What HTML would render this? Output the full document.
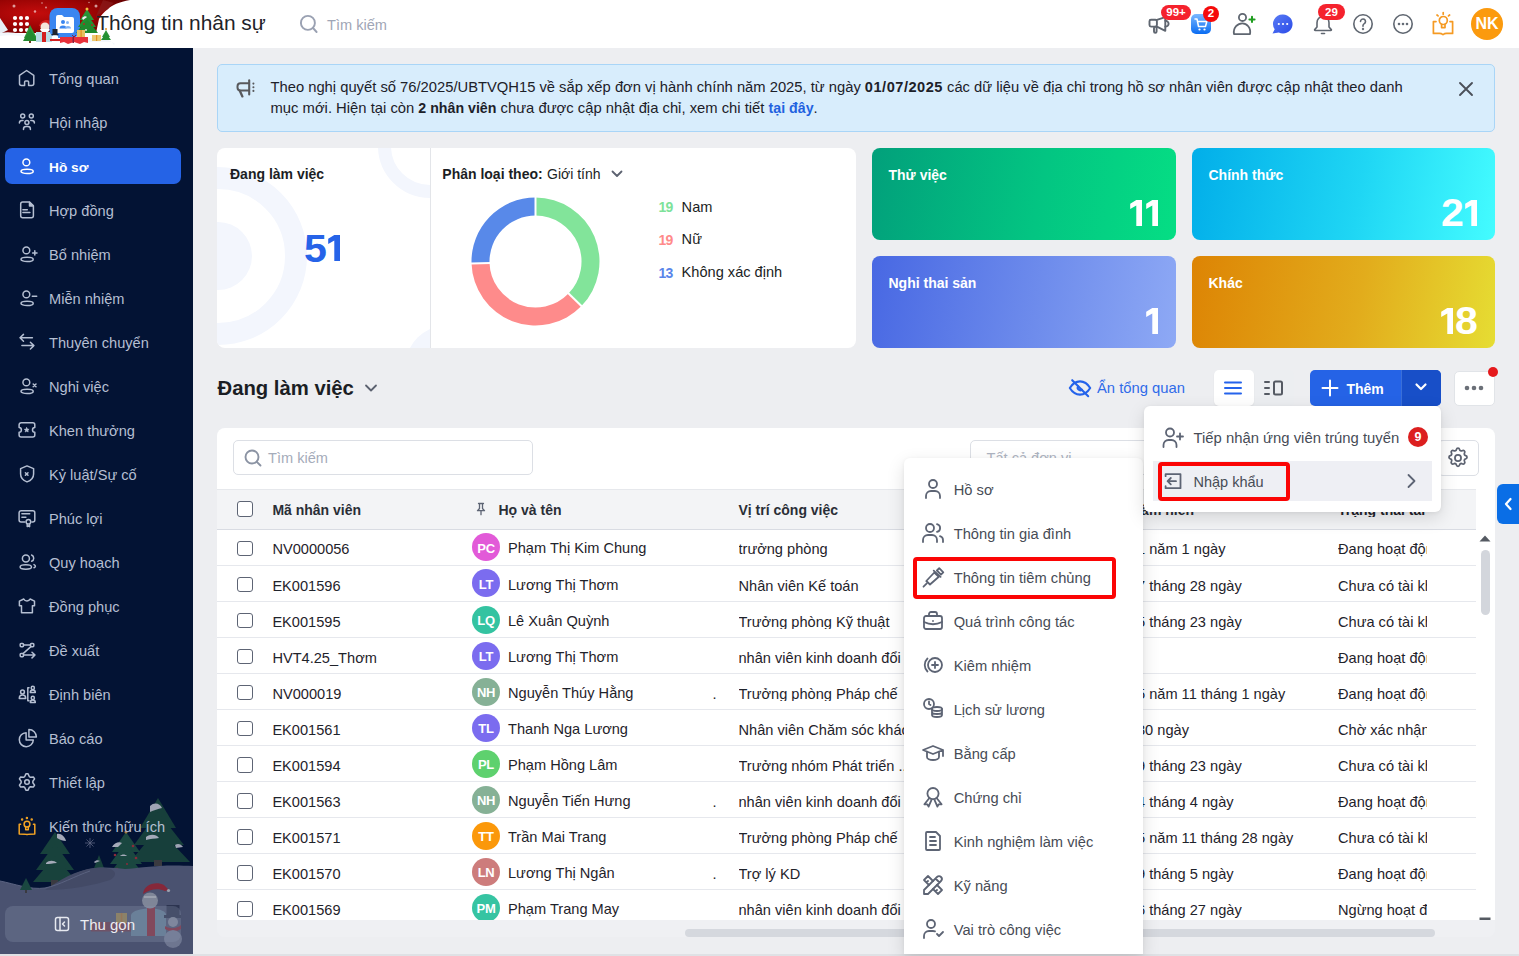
<!DOCTYPE html>
<html><head><meta charset="utf-8">
<style>
*{box-sizing:border-box;margin:0;padding:0}
html,body{width:1519px;height:956px;overflow:hidden;font-family:"Liberation Sans",sans-serif;background:#edeef1;color:#1f2329;position:relative}
.a{position:absolute}
.t{position:absolute;white-space:nowrap;line-height:1}
svg{display:block}

</style></head>
<body>
<div class="a" style="left:0px;top:0px;width:1519px;height:48px;background:#fff"></div>
<svg class="a" style="left:0;top:0" width="150" height="48" viewBox="0 0 150 48">
<defs><radialGradient id="rg" cx="0.28" cy="0.4" r="0.75"><stop offset="0" stop-color="#c40c0c"/><stop offset="0.6" stop-color="#9a0404"/><stop offset="1" stop-color="#6a0000"/></radialGradient></defs>
<path d="M0 0H130C119 2 112 5 108 9C104 12 101 15 99 19L96 33H0z" fill="url(#rg)"/><path d="M103 0L96 16L108 9C110 6 112 4 114 3z" fill="#8a1c1c" opacity="0.7"/>
<path d="M0 18L8 30L0 34z" fill="#e8eef5"/>
<path d="M0 33C12 31 22 34 30 37C45 40 70 40 90 38C100 36 110 40 115 44L110 47H10L0 45z" fill="#f2f6fb"/>
<path d="M0 36C20 33 35 40 60 42C80 43 95 41 112 42L115 47H0z" fill="#ffffff"/>
<g fill="#ffffff"><circle cx="15" cy="18" r="2.1"/><circle cx="21" cy="18" r="2.1"/><circle cx="27" cy="18" r="2.1"/><circle cx="15" cy="24" r="2.1"/><circle cx="21" cy="24" r="2.1"/><circle cx="27" cy="24" r="2.1"/><circle cx="15" cy="30" r="2.1"/><circle cx="21" cy="30" r="2.1"/><circle cx="27" cy="30" r="2.1"/></g>
<g fill="#ffffff" opacity="0.6"><circle cx="14" cy="6" r="1.5"/><circle cx="42" cy="3" r="0.8"/><circle cx="46" cy="7.5" r="0.9"/><circle cx="35" cy="11.5" r="1.2"/><circle cx="96" cy="6" r="1.5"/><circle cx="89" cy="2.5" r="0.7"/></g>
<!-- small tree left -->
<path d="M30 25L24 38H37z" fill="#2e9a3a"/><path d="M30 29L23 41H38z" fill="#238a30"/><rect x="29" y="41" width="2" height="2" fill="#6b4020"/>
<!-- santa -->
<path d="M39 26C40 20 48 18 52 22L51 26z" fill="#d42020"/><circle cx="45" cy="27" r="4.5" fill="#f4e6dc"/><path d="M40 29C41 34 49 34 50 29z" fill="#ffffff"/>
<path d="M36 32H52V42H36z" fill="#b8dde6"/><path d="M42 32H46V42H42z" fill="#d42020"/>
<!-- app logo -->
<rect x="49.5" y="8" width="30.5" height="30" rx="8" fill="#3a86f0"/>
<path d="M56 17a2 2 0 0 1 2-2h4l2 2h8a2 2 0 0 1 2 2v12a2 2 0 0 1-2 2H58a2 2 0 0 1-2-2z" fill="#ffffff"/>
<circle cx="63" cy="22" r="2" fill="#3a86f0"/><circle cx="67.5" cy="22.5" r="1.5" fill="#7fb2f5"/><path d="M59.5 28.5a3.5 3 0 0 1 7 0z" fill="#3a86f0"/><path d="M65 28.5a3 2.6 0 0 1 6 0z" fill="#7fb2f5"/>
<!-- snowman -->
<circle cx="55" cy="38" r="3.2" fill="#ffffff"/><rect x="52.5" y="29" width="5" height="6" fill="#20242e"/><rect x="51.5" y="34" width="7" height="1.2" fill="#20242e"/><path d="M50 39H60V41H50z" fill="#d42020"/>
<!-- red gift -->
<path d="M60 37H88V43L84 42L80 44L74 42L68 44L64 42L60 43z" fill="#e8313a"/><path d="M72 35L74 37L76 35" stroke="#8a2040" stroke-width="1" fill="none"/><rect x="72.5" y="37" width="1.5" height="6" fill="#8a2040"/>
<!-- big tree -->
<path d="M87 9L80 20H94z" fill="#2a9438"/><path d="M87 14L78 27H96z" fill="#239032"/><path d="M87 19L76 33H98z" fill="#1f8a2e"/>
<circle cx="87" cy="9" r="1.5" fill="#f0c040"/><circle cx="84" cy="24" r="0.9" fill="#c02020"/><circle cx="92" cy="25" r="0.9" fill="#c02020"/><circle cx="86" cy="30" r="0.9" fill="#f0f0f0"/>
<path d="M82 18C84 16 86 16 87 17L83 20z" fill="#eef2f5"/>
<!-- gold gifts -->
<rect x="77" y="30" width="8" height="7" fill="#e8c060"/><rect x="80.5" y="30" width="1.2" height="7" fill="#e39020"/>
<rect x="92" y="35" width="9" height="6" fill="#ecc870"/><rect x="96" y="35" width="1.2" height="6" fill="#e39020"/>
<!-- small tree right -->
<path d="M106 30L102 37H110z" fill="#2a9438"/><path d="M106 33L101 40H111z" fill="#239032"/><circle cx="106" cy="29" r="1" fill="#e39020"/>
</svg>
<div class="t" style="left:96.2px;top:13.01px;font-size:20.9px;color:#1f2329;" >Thông tin nhân sự</div>
<svg class="a" style="left:297px;top:12px;color:#9aa1b2;" width="22" height="22" viewBox="0 0 22 22" fill="none" stroke="currentColor" stroke-width="1.9" stroke-linecap="round" stroke-linejoin="round" ><circle cx="10.9" cy="10.9" r="7"/><path d="M16 16l3.6 4"/></svg>
<div class="t" style="left:327px;top:17.84px;font-size:14.6px;color:#9fa6b6;" >Tìm kiếm</div>
<svg class="a" style="left:1146px;top:14px;color:#5f6670;" width="26" height="22" viewBox="0 0 26 22" fill="none" stroke="currentColor" stroke-width="1.9" stroke-linecap="round" stroke-linejoin="round" ><rect x="3.5" y="5.8" width="7.4" height="6.8" rx="1.5"/><path d="M10.9 5.8L19.3 3.2V16.8L10.9 12.6"/><path d="M19.3 6.8a3.3 2.9 0 0 1 0 5.8"/><rect x="8" y="12.6" width="2.6" height="6.2" rx="1.3"/></svg>
<div class="a" style="left:1161px;top:5px;width:30px;height:15px;background:#f5222d;border-radius:8px"></div>
<div class="t" style="left:1162px;top:7.07px;font-size:11.5px;font-weight:700;color:#fff;width:28px;text-align:center" >99+</div>
<svg class="a" style="left:1191px;top:14px" width="20" height="20" viewBox="0 0 20 20"><defs><linearGradient id="cg" x1="0" y1="0" x2="0" y2="1"><stop offset="0" stop-color="#7ab8ff"/><stop offset="1" stop-color="#0a6cf2"/></linearGradient></defs><rect width="20" height="20" rx="5" fill="url(#cg)"/><path d="M4 5h2l1.5 7.5h7l1.3-5H7" fill="none" stroke="#fff" stroke-width="1.5" stroke-linecap="round" stroke-linejoin="round"/><circle cx="8.5" cy="15.5" r="1.1" fill="#fff"/><circle cx="13.5" cy="15.5" r="1.1" fill="#fff"/></svg>
<div class="a" style="left:1203px;top:6px;width:16px;height:16px;background:#f50a0a;border-radius:50%"></div>
<div class="t" style="left:1203px;top:8.47px;font-size:11.5px;font-weight:700;color:#fff;width:16px;text-align:center" >2</div>
<svg class="a" style="left:1230px;top:10px;color:#5f6670;" width="28" height="28" viewBox="0 0 28 28" fill="none" stroke="currentColor" stroke-width="1.8" stroke-linecap="round" stroke-linejoin="round" ><circle cx="12.5" cy="7.4" r="3.6"/><path d="M4 24.1C2.8 17.5 8 13.3 12.3 13.3S21.2 17.5 20 24.1Z"/></svg>
<svg class="a" style="left:1230px;top:10px;color:#1f9d1f;" width="28" height="28" viewBox="0 0 28 28" fill="none" stroke="currentColor" stroke-width="2" stroke-linecap="round" stroke-linejoin="round" ><path d="M22 6.8v5.2M19.4 9.4h5.2"/></svg>
<svg class="a" style="left:1272px;top:14px" width="21" height="20" viewBox="0 0 21 20"><defs><linearGradient id="mg" x1="0" y1="0" x2="1" y2="1"><stop offset="0" stop-color="#5a7cf5"/><stop offset="1" stop-color="#2a4be8"/></linearGradient></defs><path d="M11 0.5a9.5 9.5 0 1 1-4.2 18L0.5 19.5l2.2-4.2A9.5 9.5 0 0 1 11 0.5z" fill="url(#mg)"/><circle cx="6.8" cy="10" r="1.1" fill="#fff"/><circle cx="11" cy="10" r="1.1" fill="#fff"/><circle cx="15.2" cy="10" r="1.1" fill="#fff"/></svg>
<svg class="a" style="left:1312px;top:13px;color:#5f6670;" width="22" height="22" viewBox="0 0 22 22" fill="none" stroke="currentColor" stroke-width="1.6" stroke-linecap="round" stroke-linejoin="round" ><path d="M11 3.5c-3.5 0-6 2.7-6 6.2v4.3l-2.3 2.6c-.3.4 0 .9.5.9h15.6c.5 0 .8-.5.5-.9L17 14V9.7c0-3.5-2.5-6.2-6-6.2z"/><path d="M9.5 20.5h3"/></svg>
<div class="a" style="left:1318px;top:4px;width:27px;height:16px;background:#f5222d;border-radius:8px"></div>
<div class="t" style="left:1318px;top:6.57px;font-size:11.5px;font-weight:700;color:#fff;width:27px;text-align:center" >29</div>
<svg class="a" style="left:1352px;top:13px;color:#5f6670;" width="22" height="22" viewBox="0 0 22 22" fill="none" stroke="currentColor" stroke-width="1.6" stroke-linecap="round" stroke-linejoin="round" ><circle cx="11" cy="11" r="9.2"/><path d="M8.5 8.5a2.5 2.5 0 1 1 3.8 2.1c-.8.5-1.3 1-1.3 2v.6"/><circle cx="11" cy="16" r="0.4" fill="currentColor"/></svg>
<svg class="a" style="left:1392px;top:13px;color:#5f6670;" width="22" height="22" viewBox="0 0 22 22" fill="none" stroke="currentColor" stroke-width="1.6" stroke-linecap="round" stroke-linejoin="round" ><circle cx="11" cy="11" r="9.2"/><circle cx="7" cy="11" r="0.5" fill="currentColor"/><circle cx="11" cy="11" r="0.5" fill="currentColor"/><circle cx="15" cy="11" r="0.5" fill="currentColor"/></svg>
<svg class="a" style="left:1431px;top:10px;color:#f59a23;" width="24" height="26" viewBox="0 0 24 26" fill="none" stroke="currentColor" stroke-width="1.7" stroke-linecap="round" stroke-linejoin="round" ><path d="M5 11.6H2.4V23.4H8.5c1.3 0 2.4.4 3.5 1.2 1.1-.8 2.2-1.2 3.5-1.2h6.1V11.6H19"/><circle cx="12.3" cy="10.5" r="4"/><path d="M10.6 14.4v3.2h3.4v-3.2"/><path d="M12.2 2.6v1.6M6 5l1.1.9M18.6 5l-1.1.9"/></svg>
<div class="a" style="left:1471px;top:8px;width:32px;height:32px;background:#fb9a0e;border-radius:50%"></div>
<div class="t" style="left:1471px;top:16.46px;font-size:16px;font-weight:700;color:#fff;width:32px;text-align:center" >NK</div>

<div class="a" style="left:0px;top:48px;width:193px;height:908px;background:#031334"></div>
<svg class="a" style="left:0;top:790px" width="193" height="164" viewBox="0 0 193 164">
<!-- snowflake -->
<g stroke="#5a6380" stroke-width="0.8"><path d="M90 48v10M85 53h10M86.5 49.5l7 7M93.5 49.5l-7 7"/></g>
<!-- big right tree -->
<g fill="#173f3b">
<path d="M158 8L140 38H176z"/><path d="M158 22L134 55H184z"/><path d="M158 38L130 72H190z"/>
<rect x="154" y="70" width="8" height="6" fill="#3a3a40"/>
</g>
<path d="M150 16c4-4 10-3 12 2c-4 1-8 2-12 4z" fill="#9ea3b3"/>
<path d="M146 47c4-3 10-3 13 1c-4 .5-9 1-13 2z" fill="#a5aab9"/>
<path d="M175 55c3-2 6-1 8 2l-7 1z" fill="#9ea3b3"/>
<!-- left tree -->
<g fill="#18423c">
<path d="M55 42L40 64H70z"/><path d="M55 54L36 80H74z"/><path d="M55 66L33 92H77z"/>
<rect x="51" y="90" width="7" height="6" fill="#3a3a40"/>
</g>
<path d="M57 44c4-1 8 3 9 7c-3 0-6-1-9-3z" fill="#a5aab9"/>
<path d="M46 73c3-3 8-3 11 0c-4 .5-8 1-11 1z" fill="#a5aab9"/>
<!-- small tree -->
<path d="M99 65L91 86H107z" fill="#18423c"/><path d="M94 72c2-2 4-2 6-1l-5 2z" fill="#9ea3b3"/>
<!-- ornament tree -->
<g fill="#1a4740">
<path d="M126 42L112 62H140z"/><path d="M126 52L110 74H142z"/><path d="M126 62L108 86H145z"/>
</g>
<path d="M112 57c2-4 7-6 10-4l-4 4z" fill="#a5aab9"/><path d="M120 66c2-2 5-2 7 0z" fill="#a5aab9"/>
<circle cx="126" cy="42" r="1.6" fill="#a07840"/>
<g fill="#8a2a3a"><circle cx="133" cy="56" r="1.3"/><circle cx="115" cy="65" r="1.3"/><circle cx="136" cy="68" r="1.3"/><circle cx="117" cy="79" r="1.3"/><circle cx="127" cy="74" r="1"/></g>
<!-- hills -->
<path d="M0 91C15 94 30 100 45 98C60 95 70 84 85 80C100 76 115 78 125 79C140 78 160 74 193 76V164H0z" fill="#4a5270"/>
<path d="M45 100C60 90 75 80 95 78C115 76 120 84 110 90C95 95 70 100 45 100z" fill="#434a66"/>
<path d="M0 91C15 94 30 100 45 98C60 95 75 86 90 81" fill="none" stroke="#5a6280" stroke-width="1"/>
<!-- tiny tree -->
<path d="M26 88L20 100H32z" fill="#1a4740"/><rect x="25" y="100" width="2" height="3" fill="#3a3a40"/>
<!-- sled & gift -->
<path d="M91 132H132V141.5H91z" fill="#6a3545" opacity="0.8"/>
<rect x="116" y="123" width="11" height="10" fill="#8c7a4e"/><rect x="120.8" y="123" width="1.5" height="10" fill="#9a6a3a"/>
<!-- santa -->
<path d="M131 125C133 117 163 116 166 124L166 146H131z" fill="#5d7890"/>
<rect x="147" y="117" width="8" height="29" fill="#7e2c3e"/>
<circle cx="150" cy="110.5" r="8" fill="#7f8698"/>
<path d="M143 104C144 94 156 91 164 95L169 100L165 101C158 98 150 99 143 104Z" fill="#86283a"/>
<circle cx="168.5" cy="100.5" r="1.6" fill="#9aa0ae"/>
<path d="M144 107h12" stroke="#9aa0ae" stroke-width="2"/>
<!-- snowman -->
<rect x="166.5" y="115" width="13" height="11" fill="#2c3450"/><rect x="164" y="125" width="17" height="3" fill="#2c3450"/>
<circle cx="173" cy="132" r="5" fill="#7a8296"/>
<path d="M165 136c4 3 12 3 16-1v4c-5 3-11 3-16 0z" fill="#7e2c3e"/>
<circle cx="173" cy="149" r="9" fill="#6e7690"/>
</svg>
<svg class="a" style="left:15px;top:66px;color:#b5bfd2;" width="24" height="24" viewBox="0 0 24 24" fill="none" stroke="currentColor" stroke-width="1.5" stroke-linecap="round" stroke-linejoin="round" ><path d="M4.5 9.4L11.6 4.5L18.8 9.4V17.4a2 2 0 0 1-2 2H13.6V16.1a1 1 0 0 0-1-1H10.6a1 1 0 0 0-1 1V19.4H6.5a2 2 0 0 1-2-2Z"/></svg>
<div class="t" style="left:49px;top:72.04px;font-size:14.6px;color:#b5bfd2;" >Tổng quan</div>
<svg class="a" style="left:15px;top:110px;color:#b5bfd2;" width="24" height="24" viewBox="0 0 24 24" fill="none" stroke="currentColor" stroke-width="1.5" stroke-linecap="round" stroke-linejoin="round" ><circle cx="7.7" cy="6.1" r="2"/><circle cx="16.3" cy="6.1" r="2"/><circle cx="11.9" cy="12.5" r="2"/><path d="M4.4 13a2.5 2.5 0 0 1 2.5-2.5H8M19.4 13a2.5 2.5 0 0 0-2.5-2.5H15.8M8.5 19.6v-.5a2.5 2.5 0 0 1 2.5-2.5h1.9a2.5 2.5 0 0 1 2.5 2.5v.5"/></svg>
<div class="t" style="left:49px;top:116.04px;font-size:14.6px;color:#b5bfd2;" >Hội nhập</div>
<div class="a" style="left:5px;top:148px;width:176px;height:36px;background:#2563e6;border-radius:7px"></div>
<svg class="a" style="left:15px;top:154px;color:#ffffff;" width="24" height="24" viewBox="0 0 24 24" fill="none" stroke="currentColor" stroke-width="1.5" stroke-linecap="round" stroke-linejoin="round" ><circle cx="11.35" cy="8.4" r="3.4"/><ellipse cx="12.1" cy="17.4" rx="6.1" ry="2.05"/></svg>
<div class="t" style="left:49px;top:160.80px;font-size:13.7px;font-weight:700;color:#ffffff;" >Hồ sơ</div>
<svg class="a" style="left:15px;top:198px;color:#b5bfd2;" width="24" height="24" viewBox="0 0 24 24" fill="none" stroke="currentColor" stroke-width="1.5" stroke-linecap="round" stroke-linejoin="round" ><path d="M7.7 4H14.5L18.4 7.9V17.8a2 2 0 0 1-2 2H7.7a2 2 0 0 1-2-2V6a2 2 0 0 1 2-2z"/><path d="M14.5 4.2v3.7h3.7z" fill="currentColor"/><path d="M7.9 11.7h4.4M7.9 14.6h7"/></svg>
<div class="t" style="left:49px;top:204.04px;font-size:14.6px;color:#b5bfd2;" >Hợp đồng</div>
<svg class="a" style="left:15px;top:242px;color:#b5bfd2;" width="24" height="24" viewBox="0 0 24 24" fill="none" stroke="currentColor" stroke-width="1.5" stroke-linecap="round" stroke-linejoin="round" ><circle cx="11.35" cy="8.4" r="3.4"/><ellipse cx="12.1" cy="17.4" rx="6.1" ry="2.05"/><path d="M19.8 8.7v4.4M17.6 10.9h4.4"/></svg>
<div class="t" style="left:49px;top:248.04px;font-size:14.6px;color:#b5bfd2;" >Bổ nhiệm</div>
<svg class="a" style="left:15px;top:286px;color:#b5bfd2;" width="24" height="24" viewBox="0 0 24 24" fill="none" stroke="currentColor" stroke-width="1.5" stroke-linecap="round" stroke-linejoin="round" ><circle cx="11.35" cy="8.4" r="3.4"/><ellipse cx="12.1" cy="17.4" rx="6.1" ry="2.05"/><path d="M17.3 10.3h4.4"/></svg>
<div class="t" style="left:49px;top:292.04px;font-size:14.6px;color:#b5bfd2;" >Miễn nhiệm</div>
<svg class="a" style="left:15px;top:330px;color:#b5bfd2;" width="24" height="24" viewBox="0 0 24 24" fill="none" stroke="currentColor" stroke-width="1.5" stroke-linecap="round" stroke-linejoin="round" ><path d="M17.4 7.8H5M8.5 4.4L5 7.8l3.5 3.4M6.9 15.6H18.9M15.4 12.2l3.5 3.4-3.5 3.4"/></svg>
<div class="t" style="left:49px;top:336.04px;font-size:14.6px;color:#b5bfd2;" >Thuyên chuyển</div>
<svg class="a" style="left:15px;top:374px;color:#b5bfd2;" width="24" height="24" viewBox="0 0 24 24" fill="none" stroke="currentColor" stroke-width="1.5" stroke-linecap="round" stroke-linejoin="round" ><circle cx="11.35" cy="8.4" r="3.4"/><ellipse cx="12.1" cy="17.4" rx="6.1" ry="2.05"/><path d="M18.2 10l2.8 2.8M21 10l-2.8 2.8"/></svg>
<div class="t" style="left:49px;top:380.04px;font-size:14.6px;color:#b5bfd2;" >Nghỉ việc</div>
<svg class="a" style="left:15px;top:418px;color:#b5bfd2;" width="24" height="24" viewBox="0 0 24 24" fill="none" stroke="currentColor" stroke-width="1.5" stroke-linecap="round" stroke-linejoin="round" ><path d="M6.1 4.8H17.8a2 2 0 0 1 2 2V9.6a2.3 2.3 0 0 0 0 4.6V16.9a2 2 0 0 1-2 2H6.1a2 2 0 0 1-2-2V14.2a2.3 2.3 0 0 0 0-4.6V6.8a2 2 0 0 1 2-2z"/><path d="M11.7 9.6l.75 1.5 1.65.2-1.2 1.1.3 1.6-1.5-.8-1.5.8.3-1.6-1.2-1.1 1.65-.2z" fill="currentColor" stroke-width="0.6"/></svg>
<div class="t" style="left:49px;top:424.04px;font-size:14.6px;color:#b5bfd2;" >Khen thưởng</div>
<svg class="a" style="left:15px;top:462px;color:#b5bfd2;" width="24" height="24" viewBox="0 0 24 24" fill="none" stroke="currentColor" stroke-width="1.5" stroke-linecap="round" stroke-linejoin="round" ><path d="M12 3.9L18.6 6.6V12c0 4-2.9 6.6-6.6 7.9C8.5 18.6 5.6 16 5.6 12V6.6z"/><path d="M10.4 10.7l2.6 2.6M13 10.7l-2.6 2.6"/></svg>
<div class="t" style="left:49px;top:468.04px;font-size:14.6px;color:#b5bfd2;" >Kỷ luật/Sự cố</div>
<svg class="a" style="left:15px;top:506px;color:#b5bfd2;" width="24" height="24" viewBox="0 0 24 24" fill="none" stroke="currentColor" stroke-width="1.5" stroke-linecap="round" stroke-linejoin="round" ><path d="M9.8 15.9H6.1a2 2 0 0 1-2-2V6.7a2 2 0 0 1 2-2H17.8a2 2 0 0 1 2 2v7.2a2 2 0 0 1-2 2H16.9"/><path d="M6.9 7.8h7.8M6.9 11.2h4"/><circle cx="13.4" cy="15.7" r="2.3"/><path d="M12.2 18v2.6l1.2-.8 1.2.8V18"/></svg>
<div class="t" style="left:49px;top:512.04px;font-size:14.6px;color:#b5bfd2;" >Phúc lợi</div>
<svg class="a" style="left:15px;top:550px;color:#b5bfd2;" width="24" height="24" viewBox="0 0 24 24" fill="none" stroke="currentColor" stroke-width="1.5" stroke-linecap="round" stroke-linejoin="round" ><circle cx="10.9" cy="8.4" r="3.5"/><ellipse cx="10.8" cy="17" rx="5.7" ry="2.2"/><path d="M16.6 5a3.4 3.4 0 0 1 0 6.3M19 14.6c.9.4 1.4 1 1.4 1.6s-.5 1.1-1.4 1.5"/></svg>
<div class="t" style="left:49px;top:556.04px;font-size:14.6px;color:#b5bfd2;" >Quy hoạch</div>
<svg class="a" style="left:15px;top:594px;color:#b5bfd2;" width="24" height="24" viewBox="0 0 24 24" fill="none" stroke="currentColor" stroke-width="1.5" stroke-linecap="round" stroke-linejoin="round" ><path d="M8.8 5C10 7.6 14 7.6 15.1 5L19.5 7.2V11.8H17.4V18.8H6.5V11.8H4.4V7.2Z"/></svg>
<div class="t" style="left:49px;top:600.04px;font-size:14.6px;color:#b5bfd2;" >Đồng phục</div>
<svg class="a" style="left:15px;top:638px;color:#b5bfd2;" width="24" height="24" viewBox="0 0 24 24" fill="none" stroke="currentColor" stroke-width="1.5" stroke-linecap="round" stroke-linejoin="round" ><rect x="5.2" y="5.4" width="3.3" height="3.3" rx="0.9"/><rect x="15.5" y="5.4" width="3.3" height="3.3" rx="0.9"/><rect x="5.2" y="15.4" width="3.3" height="3.3" rx="0.9"/><path d="M8.5 7.05h7M15.9 8.6L8.1 15.6M8.5 17.05H20M17 14.2l3 2.85-3 2.85"/></svg>
<div class="t" style="left:49px;top:644.04px;font-size:14.6px;color:#b5bfd2;" >Đề xuất</div>
<svg class="a" style="left:15px;top:682px;color:#b5bfd2;" width="24" height="24" viewBox="0 0 24 24" fill="none" stroke="currentColor" stroke-width="1.5" stroke-linecap="round" stroke-linejoin="round" ><circle cx="7.5" cy="10" r="1.9"/><path d="M4.3 16.5v-.3a3.2 3.2 0 0 1 6.4 0v.3z"/><path d="M14 5.8h-1.2v13h1.2"/><circle cx="17.8" cy="5.9" r="1.6"/><path d="M15.3 10.5a2.5 2.5 0 0 1 5 0z"/><circle cx="17.8" cy="15.9" r="1.6"/><path d="M15.3 20.5a2.5 2.5 0 0 1 5 0z"/></svg>
<div class="t" style="left:49px;top:688.04px;font-size:14.6px;color:#b5bfd2;" >Định biên</div>
<svg class="a" style="left:15px;top:726px;color:#b5bfd2;" width="24" height="24" viewBox="0 0 24 24" fill="none" stroke="currentColor" stroke-width="1.5" stroke-linecap="round" stroke-linejoin="round" ><path d="M11.1 6.7A7 7 0 1 0 18.3 14H11.1Z"/><path d="M13.9 3.6V11.1H21.4A7.5 7.5 0 0 0 13.9 3.6Z"/></svg>
<div class="t" style="left:49px;top:732.04px;font-size:14.6px;color:#b5bfd2;" >Báo cáo</div>
<svg class="a" style="left:15px;top:770px;color:#b5bfd2;" width="24" height="24" viewBox="0 0 24 24" fill="none" stroke="currentColor" stroke-width="1.5" stroke-linecap="round" stroke-linejoin="round" ><path d="M10.93 3.87 L13.07 3.87 L14.26 6.55 L15.59 7.32 L18.51 7.01 L19.58 8.86 L17.85 11.23 L17.85 12.77 L19.58 15.14 L18.51 16.99 L15.59 16.68 L14.26 17.45 L13.07 20.13 L10.93 20.13 L9.74 17.45 L8.41 16.68 L5.49 16.99 L4.42 15.14 L6.15 12.77 L6.15 11.23 L4.42 8.86 L5.49 7.01 L8.41 7.32 L9.74 6.55Z"/><circle cx="12" cy="12" r="2.3"/></svg>
<div class="t" style="left:49px;top:776.04px;font-size:14.6px;color:#b5bfd2;" >Thiết lập</div>
<svg class="a" style="left:15px;top:814px;color:#f5a524;" width="24" height="24" viewBox="0 0 24 24" fill="none" stroke="currentColor" stroke-width="1.5" stroke-linecap="round" stroke-linejoin="round" ><path d="M5.6 10.2H4.2V20c2.5 0 5.8 0 7.8.5 2-.5 5.3-.5 7.8-.5V10.2H18.4"/><circle cx="12" cy="10.2" r="2.9"/><path d="M10.7 13v2.8h2.6V13"/><circle cx="11.9" cy="4" r="0.5" fill="currentColor"/><circle cx="7.1" cy="5.6" r="0.5" fill="currentColor"/><circle cx="16.7" cy="5.6" r="0.5" fill="currentColor"/></svg>
<div class="t" style="left:49px;top:820.04px;font-size:14.6px;color:#b5bfd2;" >Kiến thức hữu ích</div>
<div class="a" style="left:5px;top:906px;width:175.6px;height:36px;background:rgba(140,150,175,0.28);border-radius:8px"></div>
<svg class="a" style="left:54px;top:916px;color:#e6e9f0;" width="16" height="16" viewBox="0 0 16 16" fill="none" stroke="currentColor" stroke-width="1.5" stroke-linecap="round" stroke-linejoin="round" ><rect x="1.5" y="1.5" width="13" height="13" rx="2"/><path d="M6 1.5v13M10.5 6L8.5 8l2 2"/></svg>
<div class="t" style="left:80px;top:916.80px;font-size:15px;color:#eceef3;" >Thu gọn</div>

<div class="a" style="left:217px;top:64px;width:1278px;height:67.5px;background:#d8edfc;border:1px solid #a9d5f7;border-radius:5px"></div>
<svg class="a" style="left:230px;top:72px" width="35" height="32" viewBox="0 0 35 32" fill="none" stroke="#58595c" stroke-linecap="round" stroke-linejoin="round"><path d="M19 11.2H10.5a3 3 0 0 0-3 3v1.3a3 3 0 0 0 3 3H19" stroke-width="2"/><path d="M19.2 8.4v14" stroke-width="2.1"/><path d="M9.8 18.8l2.6 5.6" stroke-width="2.3"/><g fill="#58595c" stroke="none"><circle cx="23.4" cy="11.6" r="1.05"/><circle cx="23.4" cy="15.3" r="1.05"/><circle cx="23.4" cy="18.9" r="1.05"/></g></svg>
<div class="t" style="left:270.5px;top:80.11px;font-size:14.75px;color:#1d2129">Theo nghị quyết số 76/2025/UBTVQH15 về sắp xếp đơn vị hành chính năm 2025, từ ngày <b style="font-size:14.6px;letter-spacing:0.5px">01/07/2025</b> các dữ liệu về địa chỉ trong hồ sơ nhân viên được cập nhật theo danh</div>
<div class="t" style="left:270.5px;top:101.27px;font-size:14.8px;color:#1d2129">mục mới. Hiện tại còn <b style="font-size:14.2px">2 nhân viên</b> chưa được cập nhật địa chỉ, xem chi tiết <b style="font-size:14.2px;color:#1f62e0">tại đây</b>.</div>
<svg class="a" style="left:1458px;top:81px;color:#4b5059;" width="16" height="16" viewBox="0 0 16 16" fill="none" stroke="currentColor" stroke-width="1.9" stroke-linecap="round" stroke-linejoin="round" ><path d="M2 2l12 12M14 2L2 14"/></svg>
<div class="a" style="left:217px;top:148px;width:639px;height:200px;background:#fff;border-radius:8px;overflow:hidden">
<svg class="a" style="left:0;top:0" width="213" height="200" viewBox="0 0 213 200">
<circle cx="1" cy="108" r="78" fill="none" stroke="#f3f6fd" stroke-width="22"/>
<circle cx="1" cy="108" r="34" fill="#f3f6fd"/>
<circle cx="213" cy="-2" r="45.5" fill="none" stroke="#f3f6fd" stroke-width="13"/>
<circle cx="231" cy="220" r="43" fill="#f3f6fd"/>
</svg>
<div class="a" style="left:212.5px;top:0;width:1px;height:200px;background:#e3e5e9"></div>
</div>
<div class="t" style="left:230px;top:167.05px;font-size:14px;font-weight:700;color:#1b1e24;" >Đang làm việc</div>
<div class="t" style="left:442.3px;top:166.95px;font-size:14px;font-weight:700;color:#1b1e24;" >Phân loại theo:</div>
<div class="t" style="left:547px;top:166.95px;font-size:14px;color:#1b1e24;" >Giới tính</div>
<svg class="a" style="left:611px;top:169px;color:#5c6270;" width="12" height="10" viewBox="0 0 12 10" fill="none" stroke="currentColor" stroke-width="1.8" stroke-linecap="round" stroke-linejoin="round" ><path d="M1.5 2.5l4.5 4.5 4.5-4.5"/></svg>
<svg class="a" style="left:470.5px;top:196.5px" width="129" height="129" viewBox="0 0 129 129"><path d="M64.50 0.50A64 64 0 0 1 110.46 109.04L97.53 96.51A46 46 0 0 0 64.50 18.50z" fill="#82e49a"/><path d="M110.46 109.04A64 64 0 0 1 0.53 66.51L18.52 65.94A46 46 0 0 0 97.53 96.51z" fill="#fe8b8b"/><path d="M0.53 66.51A64 64 0 0 1 64.50 0.50L64.50 18.50A46 46 0 0 0 18.52 65.94z" fill="#5889e9"/><line x1="64.50" y1="19.50" x2="64.50" y2="-0.50" stroke="#fff" stroke-width="2"/><line x1="96.82" y1="95.82" x2="111.18" y2="109.73" stroke="#fff" stroke-width="2"/><line x1="19.52" y1="65.91" x2="-0.47" y2="66.54" stroke="#fff" stroke-width="2"/></svg>
<div class="t" style="left:658.4px;top:200.05px;font-size:14px;font-weight:700;color:#7ee29a;letter-spacing:-0.6px" >19</div>
<div class="t" style="left:681.6px;top:199.54px;font-size:14.6px;color:#1b1e24;" >Nam</div>
<div class="t" style="left:658.4px;top:232.90px;font-size:14px;font-weight:700;color:#ff8a8a;letter-spacing:-0.6px" >19</div>
<div class="t" style="left:681.6px;top:232.39px;font-size:14.6px;color:#1b1e24;" >Nữ</div>
<div class="t" style="left:658.4px;top:265.75px;font-size:14px;font-weight:700;color:#5a86ea;letter-spacing:-0.6px" >13</div>
<div class="t" style="left:681.6px;top:265.24px;font-size:14.6px;color:#1b1e24;" >Không xác định</div>
<div class="a" style="left:872px;top:148px;width:304px;height:92px;background:linear-gradient(100deg,#02a07b 0%,#03c582 55%,#05de84 100%);border-radius:8px"></div>
<div class="t" style="left:888.5px;top:168.45px;font-size:14px;font-weight:700;color:#fff;" >Thử việc</div>
<div class="a" style="left:1192px;top:148px;width:303px;height:92px;background:linear-gradient(100deg,#02aee9 0%,#1fd6f4 55%,#44fcff 100%);border-radius:8px"></div>
<div class="t" style="left:1208.5px;top:168.45px;font-size:14px;font-weight:700;color:#fff;" >Chính thức</div>
<div class="a" style="left:872px;top:256px;width:304px;height:92px;background:linear-gradient(100deg,#4868e3 0%,#6e8cec 55%,#8ea9f5 100%);border-radius:8px"></div>
<div class="t" style="left:888.5px;top:276.45px;font-size:14px;font-weight:700;color:#fff;" >Nghỉ thai sản</div>
<div class="a" style="left:1192px;top:256px;width:303px;height:92px;background:linear-gradient(100deg,#dd8404 0%,#e2ac1c 55%,#e6dd33 100%);border-radius:8px"></div>
<div class="t" style="left:1208.5px;top:276.45px;font-size:14px;font-weight:700;color:#fff;" >Khác</div>
<svg class="a" style="left:327.70px;top:234.70px" width="12.2" height="26.4" viewBox="0 0 12.2 26.4"><path d="M6.3 0H12.2V26.4H6.3V5.6L0.2 9.1V3.8Z" fill="#2663e8"/></svg>
<div class="t" style="left:304.20px;top:229.93px;font-size:38px;font-weight:700;color:#2663e8;transform:scaleX(1.08);transform-origin:0 0">5</div>
<svg class="a" style="left:1129.70px;top:199.70px" width="12.2" height="26.4" viewBox="0 0 12.2 26.4"><path d="M6.3 0H12.2V26.4H6.3V5.6L0.2 9.1V3.8Z" fill="#fff"/></svg>
<svg class="a" style="left:1145.60px;top:199.70px" width="12.2" height="26.4" viewBox="0 0 12.2 26.4"><path d="M6.3 0H12.2V26.4H6.3V5.6L0.2 9.1V3.8Z" fill="#fff"/></svg>
<div class="t" style="left:1440.70px;top:194.23px;font-size:38px;font-weight:700;color:#fff;transform:scaleX(1.08);transform-origin:0 0">2</div>
<svg class="a" style="left:1464.80px;top:199.70px" width="12.2" height="26.4" viewBox="0 0 12.2 26.4"><path d="M6.3 0H12.2V26.4H6.3V5.6L0.2 9.1V3.8Z" fill="#fff"/></svg>
<svg class="a" style="left:1145.60px;top:307.50px" width="12.2" height="26.4" viewBox="0 0 12.2 26.4"><path d="M6.3 0H12.2V26.4H6.3V5.6L0.2 9.1V3.8Z" fill="#fff"/></svg>
<svg class="a" style="left:1441.00px;top:307.70px" width="12.2" height="26.4" viewBox="0 0 12.2 26.4"><path d="M6.3 0H12.2V26.4H6.3V5.6L0.2 9.1V3.8Z" fill="#fff"/></svg>
<div class="t" style="left:1455.10px;top:302.03px;font-size:38px;font-weight:700;color:#fff;transform:scaleX(1.08);transform-origin:0 0">8</div>
<div class="t" style="left:217.5px;top:377.82px;font-size:20.3px;font-weight:700;color:#1b1e24;" >Đang làm việc</div>
<svg class="a" style="left:364px;top:383px;color:#5c6270;" width="14" height="10" viewBox="0 0 14 10" fill="none" stroke="currentColor" stroke-width="1.8" stroke-linecap="round" stroke-linejoin="round" ><path d="M2 2.5l5 5 5-5"/></svg>
<svg class="a" style="left:1067px;top:376px;color:#2563eb;" width="26" height="24" viewBox="0 0 26 24" fill="none" stroke="currentColor" stroke-width="2.1" stroke-linecap="round" stroke-linejoin="round" ><path d="M2.8 12c2.6-4.2 6.2-6.6 10.2-6.6s7.6 2.4 10.2 6.6c-2.6 4.2-6.2 6.6-10.2 6.6S5.4 16.2 2.8 12z"/><path d="M11.2 10.3a2.5 2.5 0 0 0 3.6 3.4"/><path d="M5.2 4.2l16 16"/></svg>
<div class="t" style="left:1097px;top:381.47px;font-size:14.8px;color:#2f6be9;" >Ẩn tổng quan</div>
<div class="a" style="left:1214px;top:370px;width:80px;height:35.5px;background:#eceef1;border-radius:5px"></div>
<div class="a" style="left:1214px;top:370px;width:40px;height:35.5px;background:#fff;border-radius:5px;box-shadow:0 1px 2px rgba(0,0,0,0.06)"></div>
<svg class="a" style="left:1223px;top:379px;color:#2563eb;" width="20" height="18" viewBox="0 0 20 18" fill="none" stroke="currentColor" stroke-width="2" stroke-linecap="round" stroke-linejoin="round" ><path d="M2 3.5h16M2 9h16M2 14.5h16"/></svg>
<svg class="a" style="left:1263px;top:379px;color:#555a63;" width="22" height="18" viewBox="0 0 22 18" fill="none" stroke="currentColor" stroke-width="2" stroke-linecap="round" stroke-linejoin="round" ><path d="M2 3h4M2 9h4M2 15h4"/><rect x="11" y="2.5" width="8" height="13" rx="1.5"/></svg>
<div class="a" style="left:1310px;top:370px;width:131px;height:35.7px;background:#2563e6;border-radius:5px;overflow:hidden"></div>
<div class="a" style="left:1400.5px;top:370px;width:40.5px;height:35.7px;background:#184fc8;border-radius:0 5px 5px 0;border-left:1px solid #3a6fd8"></div>
<svg class="a" style="left:1321px;top:379px;color:#fff;" width="18" height="18" viewBox="0 0 18 18" fill="none" stroke="currentColor" stroke-width="2" stroke-linecap="round" stroke-linejoin="round" ><path d="M9 1.5v15M1.5 9h15"/></svg>
<div class="t" style="left:1346.4px;top:382.35px;font-size:14px;font-weight:700;color:#fff;" >Thêm</div>
<svg class="a" style="left:1414px;top:382px;color:#fff;" width="14" height="10" viewBox="0 0 14 10" fill="none" stroke="currentColor" stroke-width="2.2" stroke-linecap="round" stroke-linejoin="round" ><path d="M2.5 2.5l4.5 4.5 4.5-4.5"/></svg>
<div class="a" style="left:1453.5px;top:370.5px;width:41px;height:35px;background:#fff;border:1px solid #e1e4e8;border-radius:5px"></div>
<svg class="a" style="left:1463px;top:384px" width="22" height="8" viewBox="0 0 22 8"><circle cx="4" cy="4" r="2.3" fill="#6b7078"/><circle cx="11" cy="4" r="2.3" fill="#6b7078"/><circle cx="18" cy="4" r="2.3" fill="#6b7078"/></svg>
<div class="a" style="left:1488px;top:367px;width:10px;height:10px;background:#e5191c;border-radius:50%"></div>

<div class="a" style="left:217px;top:428px;width:1278px;height:509px;background:#eff0f3;border-radius:8px;overflow:hidden"></div>
<div class="a" style="left:217px;top:428px;width:1278px;height:60.5px;background:#fff;border-radius:8px 8px 0 0"></div>
<div class="a" style="left:217px;top:488.5px;width:1278px;height:431px;background:#fff"></div>
<div class="a" style="left:233px;top:440px;width:300px;height:35px;background:#fff;border:1px solid #dcdfe5;border-radius:5px"></div>
<svg class="a" style="left:243px;top:448px;color:#8b93a3;" width="20" height="20" viewBox="0 0 20 20" fill="none" stroke="currentColor" stroke-width="1.9" stroke-linecap="round" stroke-linejoin="round" ><circle cx="9" cy="9" r="6.5"/><path d="M13.8 13.8l3.7 3.7"/></svg>
<div class="t" style="left:268px;top:451.34px;font-size:14.6px;color:#a5acba;" >Tìm kiếm</div>
<div class="a" style="left:969.5px;top:440px;width:480px;height:35px;background:#fff;border:1px solid #dcdfe5;border-radius:5px"></div>
<div class="t" style="left:986.5px;top:451.34px;font-size:14.6px;color:#aeb4c1;" >Tất cả đơn vị</div>
<div class="a" style="left:1438px;top:440px;width:41px;height:35.7px;background:#fff;border:1px solid #dcdfe5;border-radius:5px"></div>
<svg class="a" style="left:1446px;top:446px;color:#5c6270;" width="24" height="24" viewBox="0 0 22 22" fill="none" stroke="currentColor" stroke-width="1.6" stroke-linecap="round" stroke-linejoin="round" ><path d="M9.5 3.3c.4-1.7 2.6-1.7 3 0a1.5 1.5 0 0 0 2.3 1c1.5-.9 3.1.7 2.2 2.2a1.5 1.5 0 0 0 1 2.3c1.7.4 1.7 2.6 0 3a1.5 1.5 0 0 0-1 2.3c.9 1.5-.7 3.1-2.2 2.2a1.5 1.5 0 0 0-2.3 1c-.4 1.7-2.6 1.7-3 0a1.5 1.5 0 0 0-2.3-1c-1.5.9-3.1-.7-2.2-2.2a1.5 1.5 0 0 0-1-2.3c-1.7-.4-1.7-2.6 0-3a1.5 1.5 0 0 0 1-2.3c-.9-1.5.7-3.1 2.2-2.2a1.5 1.5 0 0 0 2.3-1z"/><circle cx="11" cy="11" r="2.8"/></svg>
<div class="a" style="left:217px;top:488.5px;width:1259px;height:41px;background:#f3f4f6;border-top:1px solid #e6e8ec;border-bottom:1px solid #d9dce3"></div>
<div class="a" style="left:237.3px;top:501.3px;width:15.5px;height:15.5px;border:1.6px solid #5d6474;border-radius:3px;background:#fff"></div>
<div class="t" style="left:272.4px;top:503.35px;font-size:14px;font-weight:700;color:#2a2e36;" >Mã nhân viên</div>
<svg class="a" style="left:474px;top:502px;color:#5d6474;" width="14" height="14" viewBox="0 0 14 14" fill="none" stroke="currentColor" stroke-width="1.3" stroke-linecap="round" stroke-linejoin="round" ><path d="M4.5 1.5h5M5.5 1.5v5l-2 2.2h7l-2-2.2v-5M7 8.7v4"/></svg>
<div class="t" style="left:498.5px;top:503.35px;font-size:14px;font-weight:700;color:#2a2e36;" >Họ và tên</div>
<div class="t" style="left:738.5px;top:503.35px;font-size:14px;font-weight:700;color:#2a2e36;" >Vị trí công việc</div>
<div class="t" style="left:1124px;top:503.35px;font-size:14px;font-weight:700;color:#2a2e36;" >Thâm niên</div>
<div class="t" style="left:1338px;top:503.35px;font-size:14px;font-weight:700;color:#1f232b;width:89px;overflow:hidden" >Trạng thái tài khoản</div>
<div class="a" style="left:237.3px;top:540.6999999999999px;width:15.5px;height:15.5px;border:1.6px solid #5d6474;border-radius:3px;background:#fff"></div>
<div class="t" style="left:272.4px;top:542.44px;font-size:14.6px;color:#1f232b;" >NV0000056</div>
<div class="a" style="left:472px;top:533.4px;width:28px;height:28px;background:#e25ad8;border-radius:50%"></div>
<div class="t" style="left:472px;top:541.60px;font-size:13px;font-weight:700;color:#fff;width:28px;text-align:center;letter-spacing:-0.3px" >PC</div>
<div class="t" style="left:508px;top:541.44px;font-size:14.6px;color:#1f232b;" >Phạm Thị Kim Chung</div>
<div class="t" style="left:738.5px;top:542.44px;font-size:14.6px;color:#1f232b;width:165px;overflow:hidden">trưởng phòng</div>
<div class="t" style="left:1137px;top:542.44px;font-size:14.6px;color:#1f232b;">1 năm 1 ngày</div>
<div class="t" style="left:1338px;top:542.44px;font-size:14.6px;color:#1f232b;width:89px;overflow:hidden">Đang hoạt động</div>
<div class="a" style="left:217px;top:564.9499999999999px;width:1259px;height:1px;background:#e6e8ed"></div>
<div class="a" style="left:237.3px;top:576.7499999999999px;width:15.5px;height:15.5px;border:1.6px solid #5d6474;border-radius:3px;background:#fff"></div>
<div class="t" style="left:272.4px;top:578.54px;font-size:14.6px;color:#1f232b;" >EK001596</div>
<div class="a" style="left:472px;top:569.4499999999999px;width:28px;height:28px;background:#7b6cef;border-radius:50%"></div>
<div class="t" style="left:472px;top:577.65px;font-size:13px;font-weight:700;color:#fff;width:28px;text-align:center;letter-spacing:-0.3px" >LT</div>
<div class="t" style="left:508px;top:577.54px;font-size:14.6px;color:#1f232b;" >Lương Thị Thơm</div>
<div class="t" style="left:738.5px;top:578.54px;font-size:14.6px;color:#1f232b;width:165px;overflow:hidden">Nhân viên Kế toán</div>
<div class="t" style="left:1137px;top:578.54px;font-size:14.6px;color:#1f232b;">7 tháng 28 ngày</div>
<div class="t" style="left:1338px;top:578.54px;font-size:14.6px;color:#1f232b;width:89px;overflow:hidden">Chưa có tài khoản</div>
<div class="a" style="left:217px;top:601.0px;width:1259px;height:1px;background:#e6e8ed"></div>
<div class="a" style="left:237.3px;top:612.8px;width:15.5px;height:15.5px;border:1.6px solid #5d6474;border-radius:3px;background:#fff"></div>
<div class="t" style="left:272.4px;top:614.64px;font-size:14.6px;color:#1f232b;" >EK001595</div>
<div class="a" style="left:472px;top:605.5px;width:28px;height:28px;background:#34c3a1;border-radius:50%"></div>
<div class="t" style="left:472px;top:613.70px;font-size:13px;font-weight:700;color:#fff;width:28px;text-align:center;letter-spacing:-0.3px" >LQ</div>
<div class="t" style="left:508px;top:613.64px;font-size:14.6px;color:#1f232b;" >Lê Xuân Quỳnh</div>
<div class="t" style="left:738.5px;top:614.64px;font-size:14.6px;color:#1f232b;width:165px;overflow:hidden">Trưởng phòng Kỹ thuật</div>
<div class="t" style="left:1137px;top:614.64px;font-size:14.6px;color:#1f232b;">5 tháng 23 ngày</div>
<div class="t" style="left:1338px;top:614.64px;font-size:14.6px;color:#1f232b;width:89px;overflow:hidden">Chưa có tài khoản</div>
<div class="a" style="left:217px;top:637.05px;width:1259px;height:1px;background:#e6e8ed"></div>
<div class="a" style="left:237.3px;top:648.8499999999999px;width:15.5px;height:15.5px;border:1.6px solid #5d6474;border-radius:3px;background:#fff"></div>
<div class="t" style="left:272.4px;top:650.74px;font-size:14.6px;color:#1f232b;" >HVT4.25_Thơm</div>
<div class="a" style="left:472px;top:641.55px;width:28px;height:28px;background:#7b6cef;border-radius:50%"></div>
<div class="t" style="left:472px;top:649.75px;font-size:13px;font-weight:700;color:#fff;width:28px;text-align:center;letter-spacing:-0.3px" >LT</div>
<div class="t" style="left:508px;top:649.74px;font-size:14.6px;color:#1f232b;" >Lương Thị Thơm</div>
<div class="t" style="left:738.5px;top:650.74px;font-size:14.6px;color:#1f232b;width:165px;overflow:hidden">nhân viên kinh doanh đổi mới</div>
<div class="t" style="left:1137px;top:650.74px;font-size:14.6px;color:#1f232b;">-</div>
<div class="t" style="left:1338px;top:650.74px;font-size:14.6px;color:#1f232b;width:89px;overflow:hidden">Đang hoạt động</div>
<div class="a" style="left:217px;top:673.0999999999999px;width:1259px;height:1px;background:#e6e8ed"></div>
<div class="a" style="left:237.3px;top:684.8999999999999px;width:15.5px;height:15.5px;border:1.6px solid #5d6474;border-radius:3px;background:#fff"></div>
<div class="t" style="left:272.4px;top:686.84px;font-size:14.6px;color:#1f232b;" >NV000019</div>
<div class="a" style="left:472px;top:677.5999999999999px;width:28px;height:28px;background:#86b196;border-radius:50%"></div>
<div class="t" style="left:472px;top:685.80px;font-size:13px;font-weight:700;color:#fff;width:28px;text-align:center;letter-spacing:-0.3px" >NH</div>
<div class="t" style="left:508px;top:685.84px;font-size:14.6px;color:#1f232b;" >Nguyễn Thúy Hằng</div>
<div class="t" style="left:712.5px;top:686.84px;font-size:14.6px;color:#1f232b;" >.</div>
<div class="t" style="left:738.5px;top:686.84px;font-size:14.6px;color:#1f232b;width:165px;overflow:hidden">Trưởng phòng Pháp chế</div>
<div class="t" style="left:1137px;top:686.84px;font-size:14.6px;color:#1f232b;">5 năm 11 tháng 1 ngày</div>
<div class="t" style="left:1338px;top:686.84px;font-size:14.6px;color:#1f232b;width:89px;overflow:hidden">Đang hoạt động</div>
<div class="a" style="left:217px;top:709.15px;width:1259px;height:1px;background:#e6e8ed"></div>
<div class="a" style="left:237.3px;top:720.9499999999999px;width:15.5px;height:15.5px;border:1.6px solid #5d6474;border-radius:3px;background:#fff"></div>
<div class="t" style="left:272.4px;top:722.94px;font-size:14.6px;color:#1f232b;" >EK001561</div>
<div class="a" style="left:472px;top:713.65px;width:28px;height:28px;background:#7b6cef;border-radius:50%"></div>
<div class="t" style="left:472px;top:721.85px;font-size:13px;font-weight:700;color:#fff;width:28px;text-align:center;letter-spacing:-0.3px" >TL</div>
<div class="t" style="left:508px;top:721.94px;font-size:14.6px;color:#1f232b;" >Thanh Nga Lương</div>
<div class="t" style="left:738.5px;top:722.94px;font-size:14.6px;color:#1f232b;width:165px;overflow:hidden">Nhân viên Chăm sóc khách hàng</div>
<div class="t" style="left:1137px;top:722.94px;font-size:14.6px;color:#1f232b;">30 ngày</div>
<div class="t" style="left:1338px;top:722.94px;font-size:14.6px;color:#1f232b;width:89px;overflow:hidden">Chờ xác nhận</div>
<div class="a" style="left:217px;top:745.1999999999999px;width:1259px;height:1px;background:#e6e8ed"></div>
<div class="a" style="left:237.3px;top:756.9999999999999px;width:15.5px;height:15.5px;border:1.6px solid #5d6474;border-radius:3px;background:#fff"></div>
<div class="t" style="left:272.4px;top:759.04px;font-size:14.6px;color:#1f232b;" >EK001594</div>
<div class="a" style="left:472px;top:749.6999999999999px;width:28px;height:28px;background:#5ed16e;border-radius:50%"></div>
<div class="t" style="left:472px;top:757.90px;font-size:13px;font-weight:700;color:#fff;width:28px;text-align:center;letter-spacing:-0.3px" >PL</div>
<div class="t" style="left:508px;top:758.04px;font-size:14.6px;color:#1f232b;" >Phạm Hồng Lâm</div>
<div class="t" style="left:738.5px;top:759.04px;font-size:14.6px;color:#1f232b;width:165px;overflow:hidden">Trưởng nhóm Phát triển ...</div>
<div class="t" style="left:1137px;top:759.04px;font-size:14.6px;color:#1f232b;">9 tháng 23 ngày</div>
<div class="t" style="left:1338px;top:759.04px;font-size:14.6px;color:#1f232b;width:89px;overflow:hidden">Chưa có tài khoản</div>
<div class="a" style="left:217px;top:781.25px;width:1259px;height:1px;background:#e6e8ed"></div>
<div class="a" style="left:237.3px;top:793.05px;width:15.5px;height:15.5px;border:1.6px solid #5d6474;border-radius:3px;background:#fff"></div>
<div class="t" style="left:272.4px;top:795.14px;font-size:14.6px;color:#1f232b;" >EK001563</div>
<div class="a" style="left:472px;top:785.75px;width:28px;height:28px;background:#86b196;border-radius:50%"></div>
<div class="t" style="left:472px;top:793.95px;font-size:13px;font-weight:700;color:#fff;width:28px;text-align:center;letter-spacing:-0.3px" >NH</div>
<div class="t" style="left:508px;top:794.14px;font-size:14.6px;color:#1f232b;" >Nguyễn Tiến Hưng</div>
<div class="t" style="left:712.5px;top:795.14px;font-size:14.6px;color:#1f232b;" >.</div>
<div class="t" style="left:738.5px;top:795.14px;font-size:14.6px;color:#1f232b;width:165px;overflow:hidden">nhân viên kinh doanh đổi mới</div>
<div class="t" style="left:1137px;top:795.14px;font-size:14.6px;color:#1f232b;">4 tháng 4 ngày</div>
<div class="t" style="left:1338px;top:795.14px;font-size:14.6px;color:#1f232b;width:89px;overflow:hidden">Đang hoạt động</div>
<div class="a" style="left:217px;top:817.3px;width:1259px;height:1px;background:#e6e8ed"></div>
<div class="a" style="left:237.3px;top:829.0999999999999px;width:15.5px;height:15.5px;border:1.6px solid #5d6474;border-radius:3px;background:#fff"></div>
<div class="t" style="left:272.4px;top:831.24px;font-size:14.6px;color:#1f232b;" >EK001571</div>
<div class="a" style="left:472px;top:821.8px;width:28px;height:28px;background:#fb980a;border-radius:50%"></div>
<div class="t" style="left:472px;top:830.00px;font-size:13px;font-weight:700;color:#fff;width:28px;text-align:center;letter-spacing:-0.3px" >TT</div>
<div class="t" style="left:508px;top:830.24px;font-size:14.6px;color:#1f232b;" >Trần Mai Trang</div>
<div class="t" style="left:738.5px;top:831.24px;font-size:14.6px;color:#1f232b;width:165px;overflow:hidden">Trưởng phòng Pháp chế</div>
<div class="t" style="left:1137px;top:831.24px;font-size:14.6px;color:#1f232b;">5 năm 11 tháng 28 ngày</div>
<div class="t" style="left:1338px;top:831.24px;font-size:14.6px;color:#1f232b;width:89px;overflow:hidden">Chưa có tài khoản</div>
<div class="a" style="left:217px;top:853.3499999999999px;width:1259px;height:1px;background:#e6e8ed"></div>
<div class="a" style="left:237.3px;top:865.1499999999999px;width:15.5px;height:15.5px;border:1.6px solid #5d6474;border-radius:3px;background:#fff"></div>
<div class="t" style="left:272.4px;top:867.34px;font-size:14.6px;color:#1f232b;" >EK001570</div>
<div class="a" style="left:472px;top:857.8499999999999px;width:28px;height:28px;background:#cd7c7c;border-radius:50%"></div>
<div class="t" style="left:472px;top:866.05px;font-size:13px;font-weight:700;color:#fff;width:28px;text-align:center;letter-spacing:-0.3px" >LN</div>
<div class="t" style="left:508px;top:866.34px;font-size:14.6px;color:#1f232b;" >Lương Thị Ngân</div>
<div class="t" style="left:712.5px;top:867.34px;font-size:14.6px;color:#1f232b;" >.</div>
<div class="t" style="left:738.5px;top:867.34px;font-size:14.6px;color:#1f232b;width:165px;overflow:hidden">Trợ lý KD</div>
<div class="t" style="left:1137px;top:867.34px;font-size:14.6px;color:#1f232b;">9 tháng 5 ngày</div>
<div class="t" style="left:1338px;top:867.34px;font-size:14.6px;color:#1f232b;width:89px;overflow:hidden">Đang hoạt động</div>
<div class="a" style="left:217px;top:889.4px;width:1259px;height:1px;background:#e6e8ed"></div>
<div class="a" style="left:237.3px;top:901.1999999999999px;width:15.5px;height:15.5px;border:1.6px solid #5d6474;border-radius:3px;background:#fff"></div>
<div class="t" style="left:272.4px;top:903.44px;font-size:14.6px;color:#1f232b;" >EK001569</div>
<div class="a" style="left:472px;top:893.9px;width:28px;height:28px;background:#36c4a2;border-radius:50%"></div>
<div class="t" style="left:472px;top:902.10px;font-size:13px;font-weight:700;color:#fff;width:28px;text-align:center;letter-spacing:-0.3px" >PM</div>
<div class="t" style="left:508px;top:902.44px;font-size:14.6px;color:#1f232b;" >Phạm Trang May</div>
<div class="t" style="left:738.5px;top:903.44px;font-size:14.6px;color:#1f232b;width:165px;overflow:hidden">nhân viên kinh doanh đổi mới</div>
<div class="t" style="left:1137px;top:903.44px;font-size:14.6px;color:#1f232b;">6 tháng 27 ngày</div>
<div class="t" style="left:1338px;top:903.44px;font-size:14.6px;color:#1f232b;width:89px;overflow:hidden">Ngừng hoạt động</div>
<div class="a" style="left:217px;top:919.5px;width:1278px;height:17.5px;background:#eff0f3;border-radius:0 0 8px 8px"></div>
<svg class="a" style="left:1479px;top:535px" width="12" height="7" viewBox="0 0 12 7"><path d="M0.5 6.5L6 0.5l5.5 6z" fill="#555a62"/></svg>
<div class="a" style="left:1481px;top:550px;width:9px;height:65px;background:#d3d6dc;border-radius:4.5px"></div>
<svg class="a" style="left:1479px;top:917px" width="12" height="4" viewBox="0 0 12 4"><path d="M0.5 0.5h11v2.5h-11z" fill="#555a62"/></svg>
<div class="a" style="left:685px;top:929px;width:750px;height:8px;background:#d5d8de;border-radius:4px"></div>
<div class="a" style="left:1497px;top:484px;width:22px;height:40px;background:#0a6ee6;border-radius:6px 0 0 6px"></div>
<svg class="a" style="left:1503px;top:497px;color:#fff;" width="10" height="14" viewBox="0 0 10 14" fill="none" stroke="currentColor" stroke-width="2.2" stroke-linecap="round" stroke-linejoin="round" ><path d="M7.5 2L3 7l4.5 5"/></svg>
<div class="a" style="left:0px;top:953.5px;width:1519px;height:2.5px;background:#dfe1e5"></div>

<div class="a" style="left:904px;top:458px;width:239px;height:495.5px;background:#fff;border-radius:6px 6px 0 0;box-shadow:0 6px 18px rgba(0,0,0,0.13),0 1px 4px rgba(0,0,0,0.06)"></div>
<svg class="a" style="left:921px;top:476.8px;color:#5d6474;" width="24" height="24" viewBox="0 0 24 24" fill="none" stroke="currentColor" stroke-width="1.8" stroke-linecap="round" stroke-linejoin="round" ><circle cx="12" cy="7" r="4"/><path d="M5 21v-2a5 5 0 0 1 5-5h4a5 5 0 0 1 5 5v2"/></svg>
<div class="t" style="left:953.7px;top:483.36px;font-size:14.7px;color:#474c56;" >Hồ sơ</div>
<svg class="a" style="left:921px;top:520.8px;color:#5d6474;" width="24" height="24" viewBox="0 0 24 24" fill="none" stroke="currentColor" stroke-width="1.8" stroke-linecap="round" stroke-linejoin="round" ><circle cx="9" cy="7" r="4"/><path d="M2 21v-2a5 5 0 0 1 5-5h4a5 5 0 0 1 5 5v2"/><path d="M16 3.1a4 4 0 0 1 0 7.8M22 21v-2a4 4 0 0 0-3-3.85"/></svg>
<div class="t" style="left:953.7px;top:527.36px;font-size:14.7px;color:#474c56;" >Thông tin gia đình</div>
<svg class="a" style="left:921px;top:564.8px;color:#5d6474;" width="24" height="24" viewBox="0 0 24 24" fill="none" stroke="currentColor" stroke-width="1.8" stroke-linecap="round" stroke-linejoin="round" ><path d="M2.5 21.7L5.8 18.4"/><path d="M5.3 16L13.3 7.5L17.8 11.8L9 19.5Z"/><path d="M12.7 5.6L19.6 11.8"/><path d="M18.2 3.2L22.3 7.3L20 9.6L15.9 5.5Z"/></svg>
<div class="t" style="left:953.7px;top:571.36px;font-size:14.7px;color:#474c56;" >Thông tin tiêm chủng</div>
<svg class="a" style="left:921px;top:608.8px;color:#5d6474;" width="24" height="24" viewBox="0 0 24 24" fill="none" stroke="currentColor" stroke-width="1.8" stroke-linecap="round" stroke-linejoin="round" ><rect x="3" y="7" width="18" height="13" rx="2"/><path d="M8 7V5a2 2 0 0 1 2-2h4a2 2 0 0 1 2 2v2M3 13a20 20 0 0 0 18 0M12 12v.01"/></svg>
<div class="t" style="left:953.7px;top:615.36px;font-size:14.7px;color:#474c56;" >Quá trình công tác</div>
<svg class="a" style="left:921px;top:652.8px;color:#5d6474;" width="24" height="24" viewBox="0 0 24 24" fill="none" stroke="currentColor" stroke-width="1.8" stroke-linecap="round" stroke-linejoin="round" ><circle cx="14" cy="12" r="7"/><path d="M14 9v6M11 12h6M6.5 5.5a9 9 0 0 0 0 13"/></svg>
<div class="t" style="left:953.7px;top:659.36px;font-size:14.7px;color:#474c56;" >Kiêm nhiệm</div>
<svg class="a" style="left:921px;top:696.8px;color:#5d6474;" width="24" height="24" viewBox="0 0 24 24" fill="none" stroke="currentColor" stroke-width="1.8" stroke-linecap="round" stroke-linejoin="round" ><circle cx="8" cy="7" r="5"/><path d="M8 4.5V7l1.5 1"/><ellipse cx="16" cy="12" rx="5" ry="2"/><path d="M11 12v3c0 1.1 2.2 2 5 2s5-.9 5-2v-3M11 15v3c0 1.1 2.2 2 5 2s5-.9 5-2v-3"/></svg>
<div class="t" style="left:953.7px;top:703.36px;font-size:14.7px;color:#474c56;" >Lịch sử lương</div>
<svg class="a" style="left:921px;top:740.8px;color:#5d6474;" width="24" height="24" viewBox="0 0 24 24" fill="none" stroke="currentColor" stroke-width="1.8" stroke-linecap="round" stroke-linejoin="round" ><path d="M22 9L12 5 2 9l10 4 10-4v6"/><path d="M6 10.6V16c0 1.7 2.7 3 6 3s6-1.3 6-3v-5.4"/></svg>
<div class="t" style="left:953.7px;top:747.36px;font-size:14.7px;color:#474c56;" >Bằng cấp</div>
<svg class="a" style="left:921px;top:784.8px;color:#5d6474;" width="24" height="24" viewBox="0 0 24 24" fill="none" stroke="currentColor" stroke-width="1.8" stroke-linecap="round" stroke-linejoin="round" ><circle cx="12" cy="8.6" r="5.6"/><path d="M8.4 13L3.4 19.3H6.3L7.6 21.6L10.4 15.2M15.6 13L20.6 19.3H17.7L16.4 21.6L13.6 15.2"/></svg>
<div class="t" style="left:953.7px;top:791.36px;font-size:14.7px;color:#474c56;" >Chứng chỉ</div>
<svg class="a" style="left:921px;top:828.8px;color:#5d6474;" width="24" height="24" viewBox="0 0 24 24" fill="none" stroke="currentColor" stroke-width="1.8" stroke-linecap="round" stroke-linejoin="round" ><path d="M6 3h9l4 4v13a1 1 0 0 1-1 1H6a1 1 0 0 1-1-1V4a1 1 0 0 1 1-1z"/><path d="M9 8h5M9 12h6M9 16h6"/></svg>
<div class="t" style="left:953.7px;top:835.36px;font-size:14.7px;color:#474c56;" >Kinh nghiệm làm việc</div>
<svg class="a" style="left:921px;top:872.8px;color:#5d6474;" width="24" height="24" viewBox="0 0 24 24" fill="none" stroke="currentColor" stroke-width="1.8" stroke-linecap="round" stroke-linejoin="round" ><path d="M3 21h4L20 8a2.8 2.8 0 0 0-4-4L3 17v4M14.5 5.5l4 4"/><path d="M12 8L7 3 3 7l5 5M7 8L5.5 9.5M16 12l5 5-4 4-5-5M16 17l-1.5 1.5"/></svg>
<div class="t" style="left:953.7px;top:879.36px;font-size:14.7px;color:#474c56;" >Kỹ năng</div>
<svg class="a" style="left:921px;top:916.8px;color:#5d6474;" width="24" height="24" viewBox="0 0 24 24" fill="none" stroke="currentColor" stroke-width="1.8" stroke-linecap="round" stroke-linejoin="round" ><circle cx="10" cy="7" r="4"/><path d="M3 21v-2a5 5 0 0 1 5-5h4c.7 0 1.4.1 2 .4M16 17l2 2 4-4"/></svg>
<div class="t" style="left:953.7px;top:923.36px;font-size:14.7px;color:#474c56;" >Vai trò công việc</div>
<div class="a" style="left:913px;top:557.4px;width:203px;height:41.5px;border:4.2px solid #fb0505;border-radius:4px"></div>
<div class="a" style="left:1144px;top:406px;width:297px;height:105.8px;background:#fff;border-radius:6px;box-shadow:0 6px 18px rgba(0,0,0,0.13),0 1px 4px rgba(0,0,0,0.06)"></div>
<svg class="a" style="left:1161px;top:426px;color:#5d6474;" width="24" height="22" viewBox="0 0 24 22" fill="none" stroke="currentColor" stroke-width="1.8" stroke-linecap="round" stroke-linejoin="round" ><circle cx="9" cy="6.5" r="4"/><path d="M2.5 21v-2a5 5 0 0 1 5-5h3a5 5 0 0 1 5 5v2M19 7.5v6M16 10.5h6"/></svg>
<div class="t" style="left:1193.5px;top:431.33px;font-size:14.85px;color:#474c56;" >Tiếp nhận ứng viên trúng tuyển</div>
<div class="a" style="left:1408px;top:427px;width:20px;height:20px;background:#dc1f1f;border-radius:50%"></div>
<div class="t" style="left:1408px;top:431.12px;font-size:12.5px;font-weight:700;color:#fff;width:20px;text-align:center" >9</div>
<div class="a" style="left:1153.3px;top:460.8px;width:278.5px;height:39.8px;background:#eeeff4"></div>
<svg class="a" style="left:1163px;top:472px;color:#5d6474;" width="19" height="18" viewBox="0 0 19 18" fill="none" stroke="currentColor" stroke-width="1.8" stroke-linecap="round" stroke-linejoin="round" ><path d="M2.6 4.2V2.2h14.9v14H2.6v-2M13 9.2H4.6M7.8 6L4.6 9.2l3.2 3.2"/></svg>
<div class="t" style="left:1193.5px;top:475.43px;font-size:14.5px;color:#474c56;" >Nhập khẩu</div>
<svg class="a" style="left:1405px;top:473px;color:#5d6474;" width="14" height="16" viewBox="0 0 14 16" fill="none" stroke="currentColor" stroke-width="1.8" stroke-linecap="round" stroke-linejoin="round" ><path d="M3.5 2l6 6-6 6"/></svg>
<div class="a" style="left:1158px;top:462.2px;width:132px;height:38.6px;border:4.2px solid #fb0505;border-radius:4px"></div>

</body></html>
